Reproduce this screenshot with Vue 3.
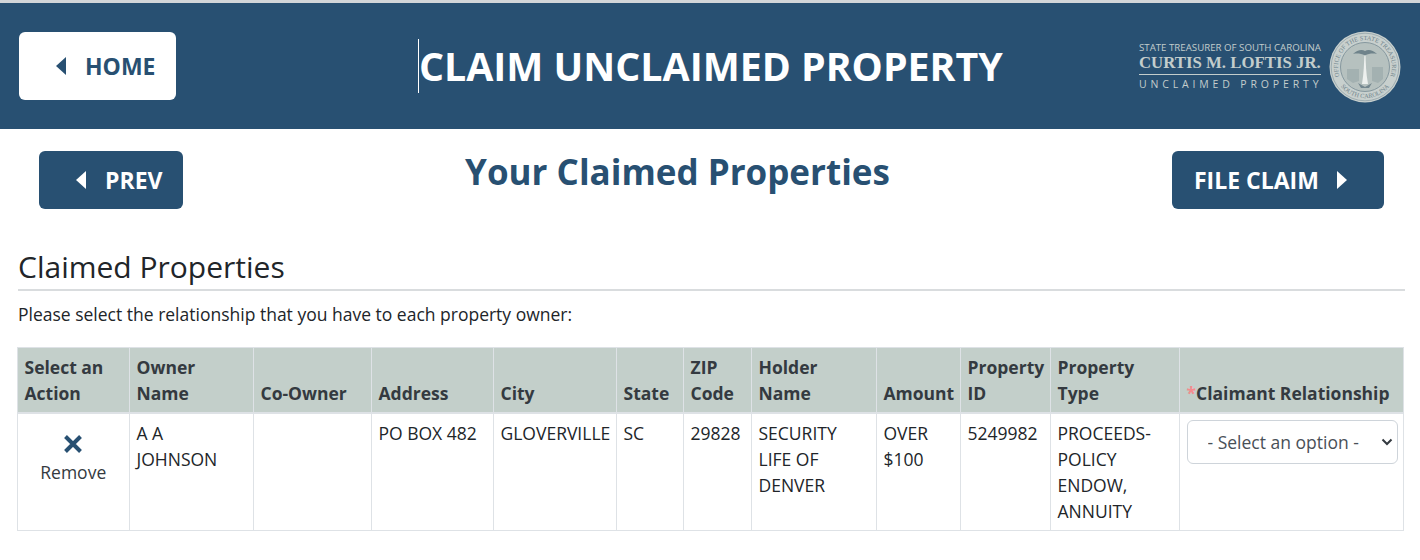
<script setup>
const columns = [
  { label: ['Select an', 'Action'], width: 112 },
  { label: ['Owner', 'Name'], width: 124 },
  { label: ['Co-Owner'], width: 118 },
  { label: ['Address'], width: 122 },
  { label: ['City'], width: 123 },
  { label: ['State'], width: 67 },
  { label: ['ZIP', 'Code'], width: 68 },
  { label: ['Holder', 'Name'], width: 125 },
  { label: ['Amount'], width: 84 },
  { label: ['Property', 'ID'], width: 90 },
  { label: ['Property', 'Type'], width: 129 }
]
const row = ['A A JOHNSON', '', 'PO BOX 482', 'GLOVERVILLE', 'SC', '29828', 'SECURITY LIFE OF DENVER', 'OVER $100', '5249982', 'PROCEEDS-POLICY ENDOW, ANNUITY']
</script>

<template>
  <div class="page">
    <header class="topbar">
      <a class="btn btn-light home">
        <svg class="tri" width="10" height="18" viewBox="0 0 10 18"><path d="M10 0v18L0 9z" /></svg>
        HOME
      </a>
      <h1 class="main-title">CLAIM UNCLAIMED PROPERTY</h1>
      <div class="brand">
        <div class="brand-text">
          <div class="b1">STATE TREASURER OF SOUTH CAROLINA</div>
          <div class="b2">CURTIS M. LOFTIS JR.</div>
          <div class="b3">UNCLAIMED PROPERTY</div>
        </div>
        <svg class="seal" width="72" height="72" viewBox="0 0 72 72">
          <circle cx="36" cy="36" r="35.500" fill="#c8d0ce" />
          <circle cx="36" cy="36" r="33.800" fill="none" stroke="#8b9ca3" stroke-width=".7" />
          <circle cx="36" cy="36" r="24.500" fill="#b6c1bf" stroke="#7f929a" stroke-width=".9" />
          <path id="sealTop" d="M11.800 48A27 27 0 1 1 60.200 48" fill="none" />
          <path id="sealBottom" d="M10 53A31 31 0 0 0 62 53" fill="none" />
          <text class="seal-text"><textPath href="#sealTop" startOffset="50%" text-anchor="middle">OFFICE OF THE STATE TREASURER</textPath></text>
          <text class="seal-text"><textPath href="#sealBottom" startOffset="50%" text-anchor="middle">SOUTH CAROLINA</textPath></text>
          <path d="M35.500 22c-.5 10-.6 20-2.500 31h6c-2-11-2.300-21-2.500-31z" fill="#edf0ee" />
          <path d="M24 23c4-4 9-5 12-3 3-2 8-1 12 3-4-1-8-.5-12 1.500-4-2-8-2.500-12-1.500z" fill="#6f838b" />
          <path d="M18 38h12v12l-6 2-6-4zM43 36h11v12l-5 4-6-2z" fill="#a3b1b1" />
          <path d="M29 52l7 4 7-4-3 5h-8z" fill="#74878f" />
        </svg>
      </div>
    </header>

    <section class="subbar">
      <a class="btn btn-dark prev">
        <svg class="tri" width="10" height="18" viewBox="0 0 10 18"><path d="M10 0v18L0 9z" /></svg>
        PREV
      </a>
      <h2 class="sub-title">Your Claimed Properties</h2>
      <a class="btn btn-dark file">
        FILE CLAIM
        <svg class="tri" width="10" height="18" viewBox="0 0 10 18"><path d="M0 0v18L10 9z" /></svg>
      </a>
    </section>

    <main class="content">
      <h3 class="section-title">Claimed Properties</h3>
      <p class="hint">Please select the relationship that you have to each property owner:</p>
      <table class="grid">
        <colgroup>
          <col v-for="c in columns" :key="c.label.join()" :style="{ width: c.width + 'px' }" />
          <col />
        </colgroup>
        <thead>
          <tr>
            <th v-for="c in columns" :key="c.label.join()">
              <template v-for="(l, i) in c.label" :key="l">
                <br v-if="i" />{{ l }}
              </template>
            </th>
            <th class="rel"><span class="req">*</span>Claimant Relationship</th>
          </tr>
        </thead>
        <tbody>
          <tr>
            <td class="action">
              <svg class="x" width="20" height="20" viewBox="0 0 20 20"><path d="M2.500 2.500l15 15M17.500 2.500l-15 15" /></svg>
              <div>Remove</div>
            </td>
            <td v-for="(v, i) in row" :key="i">{{ v }}</td>
            <td>
              <div class="pick-wrap">
                <select class="pick">
                  <option>- Select an option -</option>
                </select>
                <svg class="chev" width="12" height="8" viewBox="0 0 12 8"><path d="M1.500 1.500L6 6l4.500-4.500" /></svg>
              </div>
            </td>
          </tr>
        </tbody>
      </table>
    </main>
  </div>
</template>

<style scoped>
.page {
  width: 1420px;
  height: 560px;
  overflow: hidden;
  background: #fff;
  font-family: "Open Sans", sans-serif;
  color: #212529;
  font-size: 17.500px;
  box-sizing: border-box;
}
.topbar {
  height: 126px;
  border-top: 3px solid #d3d6d9;
  background: #285072;
  display: flex;
  align-items: center;
  box-sizing: content-box;
}
.btn {
  display: flex;
  align-items: center;
  font-weight: 700;
  border-radius: 6px;
  box-sizing: border-box;
  white-space: nowrap;
}
.tri path { fill: currentColor; }
.btn-light {
  background: #fff;
  color: #285072;
}
.btn-dark {
  background: #285072;
  color: #fff;
}
.home {
  width: 157px;
  height: 68px;
  margin-left: 19px;
  margin-top: -1px;
  padding-left: 37px;
  font-size: 23px;
  gap: 19px;
}
.main-title {
  margin: -1px 0 0 242px;
  height: 54px;
  border-left: 1px solid #fff;
  color: #fff;
  font-size: 39.300px;
  line-height: 54px;
  font-weight: 700;
  white-space: nowrap;
  width: 700px;
}
.brand {
  margin-left: auto;
  margin-right: 19px;
  margin-top: 1px;
  display: flex;
  align-items: center;
  gap: 8px;
  color: #c3cdcc;
}
.brand-text { width: 182px; }
.b1 {
  font-size: 9.700px;
  line-height: 12px;
  white-space: nowrap;
}
.b2 {
  font-family: "Liberation Serif", serif;
  font-size: 16.800px;
  line-height: 18px;
  font-weight: 700;
  white-space: nowrap;
  border-bottom: 1px solid #c3cdcc;
  padding-bottom: 2px;
  margin-bottom: 3px;
}
.b3 {
  font-size: 10.500px;
  line-height: 13px;
  letter-spacing: 3.850px;
  white-space: nowrap;
}
.seal-text {
  font-family: "Liberation Serif", serif;
  font-size: 6.300px;
  fill: #6f838b;
}
.subbar {
  display: flex;
  align-items: flex-start;
  padding: 22px 36px 0 39px;
  height: 100px;
  box-sizing: border-box;
}
.prev {
  width: 144px;
  height: 58px;
  padding-left: 37px;
  font-size: 23px;
  gap: 19px;
}
.sub-title {
  margin: -1px 0 0;
  flex: 1;
  text-align: center;
  font-size: 35px;
  line-height: 44px;
  font-weight: 700;
  color: #285072;
}
.file {
  width: 212px;
  height: 58px;
  padding-left: 22px;
  font-size: 23px;
  gap: 18px;
}
.content { padding: 0 15px 0 18px; }
.section-title {
  margin: 16px 0 0;
  font-size: 30px;
  line-height: 44px;
  font-weight: 400;
  border-bottom: 2px solid #d9dcde;
  height: 44px;
  box-sizing: content-box;
}
.hint {
  margin: 10px 0 20px;
  line-height: 26px;
  height: 26px;
}
.grid {
  margin-left: -1px;
  width: 1387px;
  table-layout: fixed;
  border-collapse: collapse;
  font-size: 17.500px;
  line-height: 26px;
}
th, td {
  border: 1px solid #dee2e6;
  padding: 6px 7px 6px 6.500px;
  vertical-align: top;
  text-align: left;
}
th {
  background: #c3cfca;
  color: #343a40;
  font-weight: 700;
  vertical-align: bottom;
  border-bottom-width: 2px;
}
.rel { white-space: nowrap; }
.req { color: #f58b8f; }
.action {
  text-align: center;
  color: #343a40;
}
.x {
  display: block;
  margin: 14px auto 5px;
}
.x path {
  stroke: #285072;
  stroke-width: 4;
  fill: none;
}
.pick-wrap {
  position: relative;
  width: 211px;
}
.pick {
  appearance: none;
  width: 100%;
  height: 44px;
  padding: 0 30px 0 20px;
  border: 1px solid #ced4da;
  border-radius: 6px;
  background: #fff;
  color: #495057;
  font-family: inherit;
  font-size: 17.500px;
  display: block;
}
.chev {
  position: absolute;
  right: 5px;
  top: 18px;
  pointer-events: none;
}
.chev path {
  fill: none;
  stroke: #343a40;
  stroke-width: 2;
}
</style>
